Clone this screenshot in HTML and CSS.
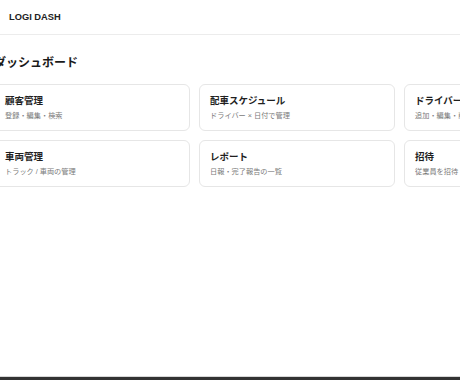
FILE: index.html
```html
<!DOCTYPE html>
<html lang="ja">
<head>
<meta charset="utf-8">
<title>LOGI DASH</title>
<link rel="stylesheet" href="styles.css">
</head>
<body>
<header class="topbar">
  <span class="brand">LOGI DASH</span>
</header>
<main class="main">
  <h1 class="page-title">ダッシュボード</h1>
  <div class="grid">
    <a class="card"><div class="card-title">顧客管理</div><div class="card-sub">登録・編集・検索</div></a>
    <a class="card"><div class="card-title">配車スケジュール</div><div class="card-sub">ドライバー × 日付で管理</div></a>
    <a class="card"><div class="card-title">ドライバー管理</div><div class="card-sub">追加・編集・削除</div></a>
    <a class="card"><div class="card-title">車両管理</div><div class="card-sub">トラック / 車両の管理</div></a>
    <a class="card"><div class="card-title">レポート</div><div class="card-sub">日報・完了報告の一覧</div></a>
    <a class="card"><div class="card-title">招待</div><div class="card-sub">従業員を招待</div></a>
  </div>
</main>
<footer class="bottombar"></footer>
</body>
</html>
```
FILE: styles.css
```css
html, body {
  margin: 0;
  padding: 0;
  overflow: hidden;
}
body {
  height: 100vh;
  display: flex;
  flex-direction: column;
  background: #fff;
  color: #222;
  font-family: "Liberation Sans", "Noto Sans CJK JP", sans-serif;
}
.topbar {
  height: 35px;
  box-sizing: border-box;
  border-bottom: 1px solid #ececec;
  display: flex;
  align-items: center;
  padding: 0 9px;
}
.brand {
  font-size: 9.3px;
  font-weight: 700;
  color: #222;
}
.main {
  flex: 1;
  margin-left: -6px;
}
.page-title {
  margin: 20px 0 13px;
  font-size: 12px;
  line-height: 16px;
  font-weight: 700;
  color: #1a1a1a;
}
.grid {
  display: grid;
  grid-template-columns: repeat(3, 196px);
  gap: 9px;
}
.card {
  display: block;
  box-sizing: border-box;
  border: 1px solid #e6e6e6;
  border-radius: 6px;
  padding: 9px 10px 9px;
  background: #fff;
}
.card-title {
  font-size: 9.5px;
  line-height: 14px;
  font-weight: 700;
  color: #1f1f1f;
  white-space: nowrap;
}
.card-sub {
  margin-top: 3px;
  font-size: 7.2px;
  line-height: 10px;
  color: #7a7a7a;
  white-space: nowrap;
}
.bottombar {
  height: 3px;
  border-top: 1px solid #d8d8d8;
  background: #333;
}
```
